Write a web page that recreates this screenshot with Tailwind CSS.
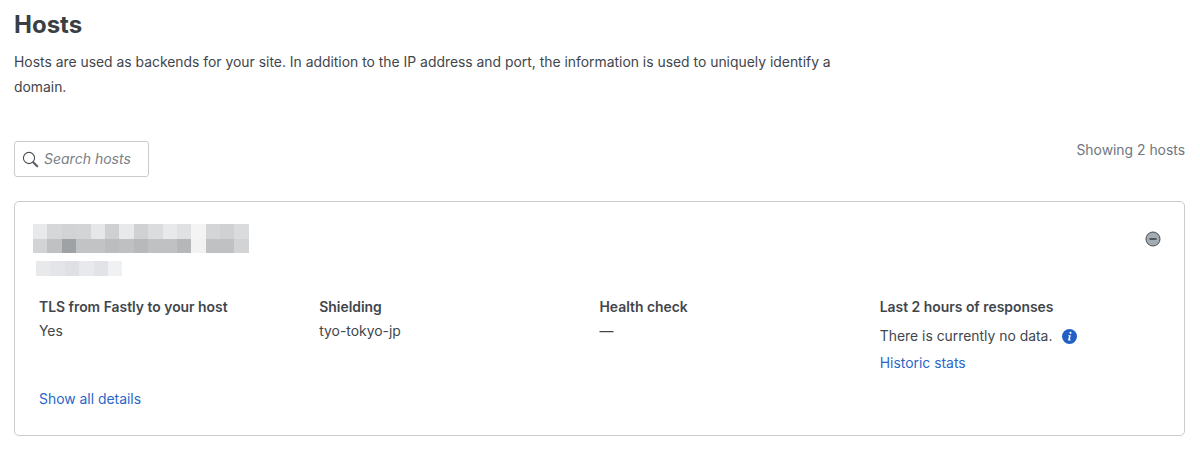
<!DOCTYPE html>
<html lang="en">

<head>
    <meta charset="UTF-8">
    <title>Hosts</title>
    <script src="https://cdn.jsdelivr.net/npm/@tailwindcss/browser@4"></script>
</head>

<body class="bg-white font-['Inter',sans-serif] text-[#41464c] h-[453px] overflow-hidden">
    <main class="pl-[14px] pr-[15px] pt-[9px]">
        <!-- Header -->
        <h1 class="text-[24px] leading-[32px] font-bold text-[#3a3f45]">Hosts</h1>
        <p class="mt-[9px] w-[830px] text-[13.9px] leading-[25px]">Hosts are used as backends for your site. In addition to the IP address and port, the information is used to uniquely identify a domain.</p>

        <!-- Search row -->
        <div class="mt-[41px] flex justify-between items-start">
            <div class="w-[135px] h-[36px] border border-[#c8ccd0] rounded-[3px] flex items-center pl-[7px] gap-[5px]">
                <svg class="w-[17px] h-[17px]" viewBox="0 0 17 17" fill="none">
                    <circle cx="7" cy="7" r="5.6" stroke="#4a4f55" stroke-width="1.1" />
                    <path d="M11.2 11.2l4 4" stroke="#5a6066" stroke-width="2.2" stroke-linecap="round" />
                </svg>
                <span class="pb-[2px] text-[14px] italic text-[#7a8087]">Search hosts</span>
            </div>
            <span class="text-[13.9px] leading-[18px] text-[#6f767e]">Showing 2 hosts</span>
        </div>

        <!-- Host card -->
        <section class="relative mt-[24px] h-[235px] border border-[#c8ccd0] rounded-[5px] px-[24px]">
            <div class="ml-[-6px] pt-[22px]">
                <div class="flex">
                    <i class="w-[14.4px] h-[15px] bg-[#e8e9ea]"></i><i class="w-[14.4px] h-[15px] bg-[#d6d7d9]"></i><i class="w-[14.4px] h-[15px] bg-[#d2d3d5]"></i><i class="w-[14.4px] h-[15px] bg-[#d3d4d6]"></i><i class="w-[14.4px] h-[15px] bg-[#e6e7e9]"></i><i class="w-[14.4px] h-[15px] bg-[#cfd0d2]"></i><i class="w-[14.4px] h-[15px] bg-[#e8e9eb]"></i><i class="w-[14.4px] h-[15px] bg-[#d0d1d3]"></i><i class="w-[14.4px] h-[15px] bg-[#dbdcde]"></i><i class="w-[14.4px] h-[15px] bg-[#e8e9eb]"></i><i class="w-[14.4px] h-[15px] bg-[#e0e1e3]"></i><i class="w-[14.4px] h-[15px] bg-[#f4f4f5]"></i><i class="w-[14.4px] h-[15px] bg-[#d4d5d7]"></i><i class="w-[14.4px] h-[15px] bg-[#d0d1d3]"></i><i class="w-[14.4px] h-[15px] bg-[#dadbdd]"></i>
                </div>
                <div class="flex">
                    <i class="w-[14.4px] h-[14px] bg-[#d2d3d5]"></i><i class="w-[14.4px] h-[14px] bg-[#c0c1c3]"></i><i class="w-[14.4px] h-[14px] bg-[#9fa2a4]"></i><i class="w-[14.4px] h-[14px] bg-[#c2c3c5]"></i><i class="w-[14.4px] h-[14px] bg-[#c2c3c5]"></i><i class="w-[14.4px] h-[14px] bg-[#bcbdbf]"></i><i class="w-[14.4px] h-[14px] bg-[#bfc0c2]"></i><i class="w-[14.4px] h-[14px] bg-[#b8b9bb]"></i><i class="w-[14.4px] h-[14px] bg-[#c0c1c3]"></i><i class="w-[14.4px] h-[14px] bg-[#c0c1c3]"></i><i class="w-[14.4px] h-[14px] bg-[#b6b7b9]"></i><i class="w-[14.4px] h-[14px] bg-[#f2f2f3]"></i><i class="w-[14.4px] h-[14px] bg-[#c0c1c3]"></i><i class="w-[14.4px] h-[14px] bg-[#c0c1c3]"></i><i class="w-[14.4px] h-[14px] bg-[#d2d3d5]"></i>
                </div>
                <div class="flex mt-[8px] ml-[3px]">
                    <i class="w-[14.4px] h-[15px] bg-[#e8e9eb]"></i><i class="w-[14.4px] h-[15px] bg-[#e4e5e8]"></i><i class="w-[14.4px] h-[15px] bg-[#dfe0e3]"></i><i class="w-[14.4px] h-[15px] bg-[#e8e9ec]"></i><i class="w-[14.4px] h-[15px] bg-[#e2e3e6]"></i><i class="w-[14.4px] h-[15px] bg-[#f0f1f3]"></i>
                </div>
            </div>

            <!-- Collapse icon -->
            <svg class="absolute right-[23px] top-[29px] w-[16px] h-[16px]" viewBox="0 0 16 16">
                <circle cx="8" cy="8" r="7" fill="#a3abb3" stroke="#454b51" stroke-width="1" />
                <path d="M4.5 8h7" stroke="#33383d" stroke-width="1.5" />
            </svg>

            <!-- Details -->
            <div class="grid grid-cols-4 mt-[20px] text-[13.9px] leading-[23px]">
                <div>
                    <h3 class="font-semibold">TLS from Fastly to your host</h3>
                    <p class="mt-[1px]">Yes</p>
                </div>
                <div>
                    <h3 class="font-semibold">Shielding</h3>
                    <p class="mt-[1px]">tyo-tokyo-jp</p>
                </div>
                <div>
                    <h3 class="font-semibold">Health check</h3>
                    <p class="mt-[1px]">—</p>
                </div>
                <div>
                    <h3 class="font-semibold">Last 2 hours of responses</h3>
                    <p class="mt-[6px] flex items-center gap-[10px]">There is currently no data.
                        <svg class="w-[15px] h-[15px]" viewBox="0 0 15 15">
                            <circle cx="7.5" cy="7.5" r="7.5" fill="#2360c5" />
                            <circle cx="8.5" cy="3.8" r="1.1" fill="#fff" />
                            <path d="M6.4 6.2h2.4l-1 4.4h1l-.2.9H6l1-4.4h-.8z" fill="#fff" />
                        </svg>
                    </p>
                    <a class="block mt-[4px] text-[#2b66c9]" href="#">Historic stats</a>
                </div>
            </div>
            <a class="absolute left-[24px] top-[185px] text-[13.9px] leading-[24px] text-[#2b66c9]" href="#">Show all details</a>
        </section>
    </main>
</body>

</html>
